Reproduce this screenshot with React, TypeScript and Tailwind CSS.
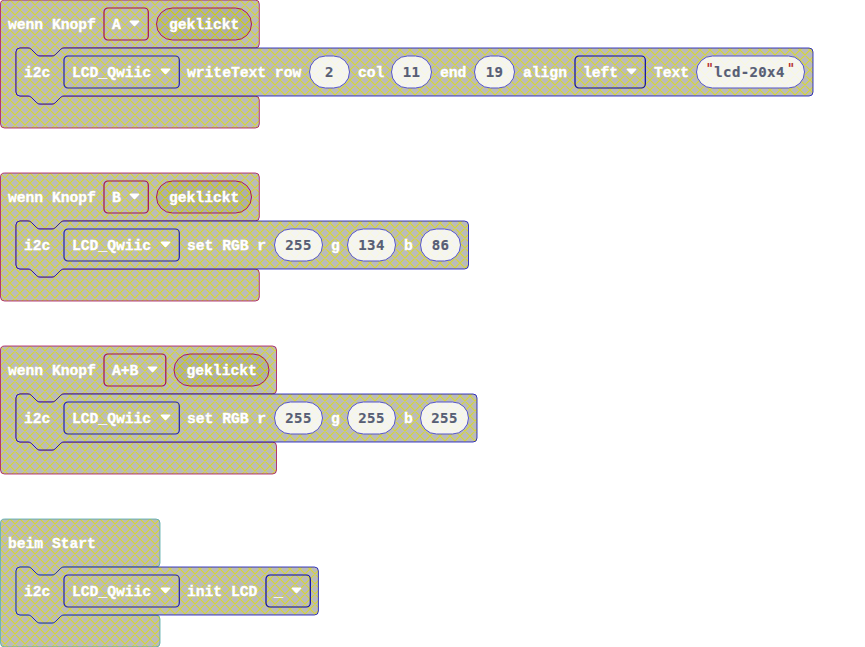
import React from "react";

const HAT = "#a3004f";
const BLUE = "#0000b3";
const FONT = "font-['Liberation_Mono',monospace] text-[14.65px] font-bold whitespace-pre [-webkit-text-stroke:0.35px_currentColor]";

function Shape({ w, cw, color, pill }: { w: number; cw: number; color: string; pill?: number }) {
  const outer = `M.5 4a4 4 0 0 1 4-4H${w - 4}a4 4 0 0 1 4 4V44a4 4 0 0 1-4 4H64c-2 0-3 1-4 2l-4 4c-1 1-2 2-4 2H40c-2 0-3-1-4-2l-4-4c-1-1-2-2-4-2H20a4 4 0 0 0-4 4V92a4 4 0 0 0 4 4H28c2 0 3 1 4 2l4 4c1 1 2 2 4 2H52c2 0 3-1 4-2l4-4c1-1 2-2 4-2H${w - 4}a4 4 0 0 1 4 4V124a4 4 0 0 1-4 4H4.5a4 4 0 0 1-4-4z`;
  const inner = `M16 52a4 4 0 0 1 4-4H28c2 0 3 1 4 2l4 4c1 1 2 2 4 2H52c2 0 3-1 4-2l4-4c1-1 2-2 4-2H${cw - 4}a4 4 0 0 1 4 4V92a4 4 0 0 1-4 4H64c-2 0-3 1-4 2l-4 4c-1 1-2 2-4 2H40c-2 0-3-1-4-2l-4-4c-1-1-2-2-4-2H20a4 4 0 0 1-4-4z`;
  return (
    <svg className="absolute left-0 top-0 overflow-visible" width="865" height="129" aria-hidden="true">
      <defs>
        <pattern id="hatch" width="10" height="10" patternUnits="userSpaceOnUse">
          <rect width="10" height="10" fill="#aaa" />
          <path d="M-2-2L12 12M12-2L-2 12M-2 8L2 12M8-2L12 2M-2 2L2-2M8 12L12 8" stroke="#cc0" strokeWidth="1.2" />
        </pattern>
      </defs>
      <path d={outer} fill="url(#hatch)" fillOpacity=".8" stroke={color} strokeOpacity=".75" />
      {pill !== undefined && (
        <rect x={pill} y="8" width="95" height="32" rx="16" fill="url(#hatch)" fillOpacity=".8" stroke={color} strokeOpacity=".85" />
      )}
      <path d={inner} fill="url(#hatch)" fillOpacity=".8" stroke={BLUE} strokeOpacity=".75" />
    </svg>
  );
}

function Select({ text, w, color }: { text: string; w: number; color: string }) {
  return (
    <span className="relative flex h-[34px] shrink-0 items-center justify-between pl-[9px] pr-[9px]" style={{ width: w }}>
      <svg className="absolute left-0 top-0 overflow-visible" width={w} height="34" aria-hidden="true">
        <rect x="1" y="1" width={w - 1.7} height="32" rx="4" fill="none" stroke={color} strokeWidth="1.2" />
      </svg>
      <span className="pt-[3px]">{text}</span>
      <svg className="mb-px" width="11" height="7" viewBox="0 0 11 7" aria-hidden="true">
        <path d="M1.5.5h8c.8 0 1.2.8.7 1.3L6.2 6a1 1 0 0 1-1.4 0L.8 1.8C.3 1.3.7.5 1.5.5z" fill="#fff" />
      </svg>
    </span>
  );
}

function Bubble({ w, children }: { w: number; children: React.ReactNode }) {
  return (
    <span className="relative flex h-[34px] shrink-0 items-center justify-center font-['DejaVu_Sans_Mono',monospace] text-[14px] tracking-[0.37px] text-[#575e75] [-webkit-text-stroke:0.2px_currentColor]" style={{ width: w }}>
      <svg className="absolute left-0 top-0 overflow-visible" width={w} height="34" aria-hidden="true">
        <rect x=".5" y="1" width={w - 1} height="32" rx="16" fill="#fff" fillOpacity=".83" stroke="#5555cc" />
      </svg>
      <span className="relative flex">{children}</span>
    </span>
  );
}

function Label({ text, w }: { text: string; w: string }) {
  return <span className={`shrink-0 pt-[3px] ${w}`}>{text}</span>;
}

function Group({ w, cw, color, pill, head, children }: { w: number; cw: number; color: string; pill?: number; head: React.ReactNode; children: React.ReactNode }) {
  return (
    <section className="relative h-32 w-full shrink-0">
      <Shape w={w} cw={cw} color={color} pill={pill} />
      <div className="relative flex h-12 items-center pl-2">{head}</div>
      <div className="relative flex h-12 items-center pl-6">
        <Label text="i2c" w="w-[39px]" />
        <Select text="LCD_Qwiic" w={117} color="#2222aa" />
        <span className="w-[7px] shrink-0" />
        {children}
      </div>
    </section>
  );
}

function ButtonHead({ text, w }: { text: string; w: number }) {
  return (
    <>
      <Label text="wenn Knopf" w="w-[95px]" />
      <Select text={text} w={w} color="#a3124f" />
      <span className="ml-5 pt-[3px]">geklickt</span>
    </>
  );
}

function Rgb({ r, g, b, bw }: { r: string; g: string; b: string; bw: number }) {
  return (
    <>
      <Label text="set RGB r" w="w-[87px]" />
      <Bubble w={49}>{r}</Bubble>
      <Label text="g" w="w-[24px] pl-2" />
      <Bubble w={49}>{g}</Bubble>
      <Label text="b" w="w-[24px] pl-2" />
      <Bubble w={bw}>{b}</Bubble>
    </>
  );
}

export default function App() {
  return (
    <main className={`flex h-[647px] w-[865px] flex-col gap-[45px] overflow-hidden bg-white text-white ${FONT}`}>
      <Group w={259.3} cw={813} color={HAT} pill={156.5} head={<ButtonHead text="A" w={46} />}>
        <Label text="writeText row" w="w-[122px]" />
        <Bubble w={41}>2</Bubble>
        <Label text="col" w="w-[41px] pl-2" />
        <Bubble w={41}>11</Bubble>
        <Label text="end" w="w-[42px] pl-2" />
        <Bubble w={41}>19</Bubble>
        <Label text="align" w="w-[59px] pl-2" />
        <Select text="left" w={72} color="#0a0aa5" />
        <Label text="Text" w="w-[50px] pl-2" />
        <Bubble w={109}>
          <span className="-mt-1 font-normal text-[#b22222]">"</span>
          lcd-20x4
          <span className="-mt-1 ml-0.5 font-normal text-[#b22222]">"</span>
        </Bubble>
      </Group>
      <Group w={259.3} cw={468.5} color={HAT} pill={156.5} head={<ButtonHead text="B" w={46} />}>
        <Rgb r="255" g="134" b="86" bw={41} />
      </Group>
      <Group w={276.5} cw={477} color={HAT} pill={174} head={<ButtonHead text="A+B" w={63.5} />}>
        <Rgb r="255" g="255" b="255" bw={49} />
      </Group>
      <Group w={160} cw={318.4} color="#4aa5a5" head={<Label text="beim Start" w="w-[95px]" />}>
        <Label text="init LCD" w="w-[78px]" />
        <Select text="_" w={46} color="#0a0aa5" />
      </Group>
    </main>
  );
}
